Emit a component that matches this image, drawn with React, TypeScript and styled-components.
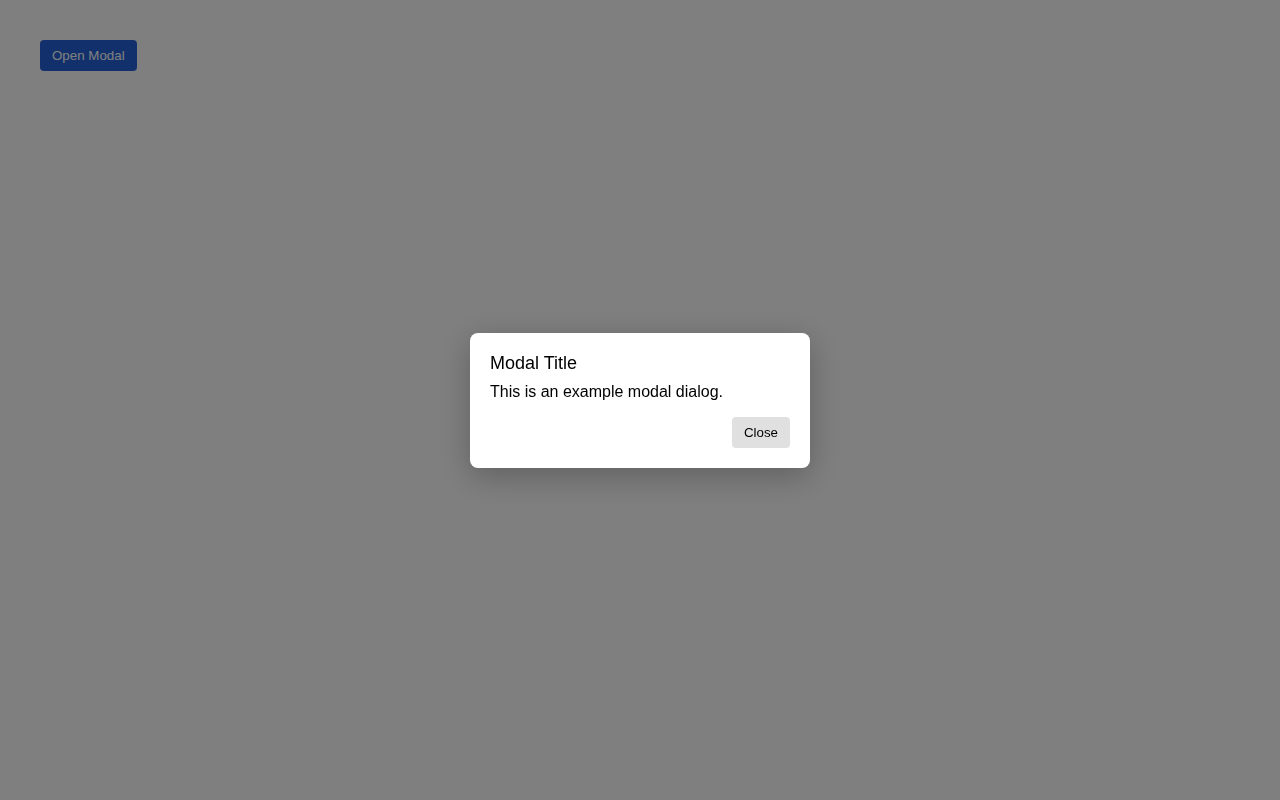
import { useState } from "react";
import styled, { createGlobalStyle } from "styled-components";

const GlobalStyle = createGlobalStyle`
  html, body {
    margin: 0;
    padding: 0;
    background: #ffffff;
    font-family: "Liberation Sans", Arial, sans-serif;
  }
`;

export default function App() {
  const [open, setOpen] = useState(true);

  return (
    <Page>
      <GlobalStyle />
      <OpenButton onClick={() => setOpen(true)}>Open Modal</OpenButton>
      {open && (
        <Overlay onClick={() => setOpen(false)}>
          <Dialog role="dialog" aria-modal="true" onClick={(e) => e.stopPropagation()}>
            <Title>Modal Title</Title>
            <Body>This is an example modal dialog.</Body>
            <Actions>
              <CloseButton onClick={() => setOpen(false)}>Close</CloseButton>
            </Actions>
          </Dialog>
        </Overlay>
      )}
    </Page>
  );
}

const Page = styled.div`
  min-height: 800px;
  padding: 40px;
  box-sizing: border-box;
`;

const OpenButton = styled.button`
  font-family: "Liberation Sans", Arial, sans-serif;
  font-size: 13.333px;
  line-height: 15px;
  padding: 8px 12px;
  border: none;
  border-radius: 4px;
  background: #2563d8;
  color: #ffffff;
  cursor: pointer;
`;

const Overlay = styled.div`
  position: fixed;
  inset: 0;
  background: rgba(0, 0, 0, 0.5);
  display: flex;
  align-items: center;
  justify-content: center;
`;

const Dialog = styled.div`
  width: 340px;
  box-sizing: border-box;
  padding: 20px;
  background: #ffffff;
  border-radius: 8px;
  box-shadow: 0 8px 32px rgba(0, 0, 0, 0.25);
`;

const Title = styled.h2`
  margin: 0 0 9px;
  font-size: 18px;
  line-height: 21px;
  font-weight: normal;
  color: #000000;
`;

const Body = styled.p`
  margin: 0;
  font-size: 16px;
  line-height: 18px;
  color: #000000;
`;

const Actions = styled.div`
  display: flex;
  justify-content: flex-end;
  margin-top: 16px;
`;

const CloseButton = styled.button`
  font-family: "Liberation Sans", Arial, sans-serif;
  font-size: 13.333px;
  line-height: 15px;
  padding: 8px 12px;
  border: none;
  border-radius: 4px;
  background: #e0e0e0;
  color: #000000;
  cursor: pointer;
`;
